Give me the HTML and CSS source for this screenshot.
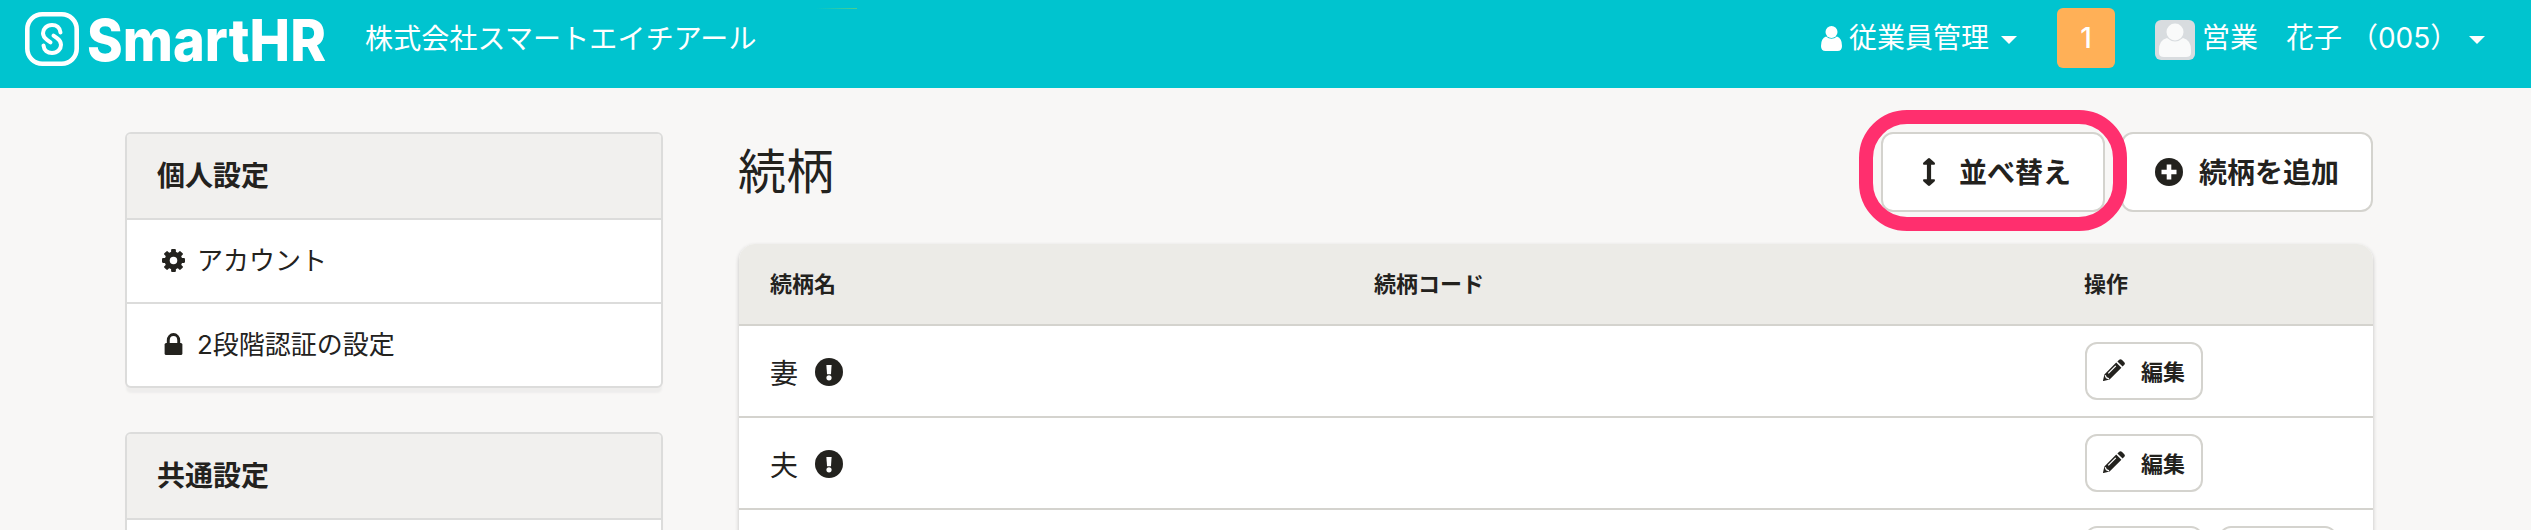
FILE: index.html
```html
<!DOCTYPE html>
<html lang="ja">
<head>
<meta charset="utf-8">
<title>続柄 | SmartHR</title>
<link rel="stylesheet" href="styles.css">
</head>
<body>
<svg class="defs" width="0" height="0">
  <symbol id="pencil" viewBox="0 0 22 22"><path fill="currentColor" d="M13.2 3.6l5.2 5.2L6.6 20.600 0.600 22Q0 22 0 21.400L1.400 15.400zM14.400 2.400L16.200 .7q1.300-1.100 2.600 0l2.500 2.500q1.200 1.300 0 2.600l-1.700 1.800z"/><path d="M5.300 14.400l7.500-7.500M2.200 16.200l1.200 2.500 2.600 1.200" fill="none" stroke="#fff" stroke-width="1.300"/></symbol>
  <symbol id="alert" viewBox="0 0 28 28"><circle cx="14" cy="14" r="14" fill="currentColor"/><path fill="#fff" d="M11.400 7h5.200l-.6 9.200h-4z"/><circle cx="14" cy="19.800" r="2.600" fill="#fff"/></symbol>
</svg>
<header class="header">
  <div class="brand">
    <svg class="mark" viewBox="0 0 54 54"><rect x="2.300" y="2.300" width="49.400" height="49.400" rx="15" fill="none" stroke="#fff" stroke-width="4.600"/><path d="M35.500 20.500C35 15.500 31.500 13 27 13c-5.500 0-9 3.800-9 8.300 0 3 1.500 4.700 4 6.500l3.500 2.500M18.500 33.500C19 38.500 22.500 41 27 41c5.500 0 9-3.800 9-8.300 0-3-1.500-4.700-4-6.500l-3.500-2.500" fill="none" stroke="#fff" stroke-width="4" stroke-linecap="round"/></svg>
    <svg class="wordmark" viewBox="0 0 250 80"><text x="0" y="61" textLength="239" lengthAdjust="spacingAndGlyphs">SmartHR</text></svg>
  </div>
  <span class="company">株式会社スマートエイチアール</span>
  <i class="glint"></i>
  <div class="menu">
    <svg class="user" viewBox="0 0 21 25"><circle cx="10.500" cy="6" r="6" fill="#fff"/><path d="M5 10.500q5.500 4.500 11 0Q21 12 21 20q0 5-4.500 5h-12Q0 25 0 20q0-8 5-9.500z" fill="#fff"/></svg>
    <span class="menu-label">従業員管理</span>
    <i class="caret"></i>
  </div>
  <span class="notice">1</span>
  <div class="account">
    <svg class="avatar" viewBox="0 0 40 40"><rect width="40" height="40" rx="6" fill="#d8dcdf"/><circle cx="20" cy="12" r="8.500" fill="#f9fafa"/><path d="M12 18q8 7 16 0 8 2 8 12v3q0 4-5 4H9q-5 0-5-4v-3q0-10 8-12z" fill="#f9fafa"/></svg>
    <span class="account-name">営業　花子 （005）</span>
    <i class="caret"></i>
  </div>
</header>
<div class="page">
  <nav class="side">
    <section class="panel">
      <h2 class="panel-title">個人設定</h2>
      <a class="panel-row"><svg class="row-icon" viewBox="0 0 22 22"><g fill="currentColor"><rect x="8.700" y="0" width="4.600" height="22" rx="1"/><rect x="8.700" y="0" width="4.600" height="22" rx="1" transform="rotate(45 11 11)"/><rect x="8.700" y="0" width="4.600" height="22" rx="1" transform="rotate(90 11 11)"/><rect x="8.700" y="0" width="4.600" height="22" rx="1" transform="rotate(135 11 11)"/><circle cx="11" cy="11" r="8.500"/></g><circle cx="11" cy="11" r="3.600" fill="#fff"/></svg>アカウント</a>
      <a class="panel-row"><svg class="row-icon" viewBox="0 0 22 22"><rect x="2.500" y="9.500" width="17" height="11.500" rx="1.500" fill="currentColor"/><path d="M6 10V7a5 5.500 0 0 1 10 0v3" fill="none" stroke="currentColor" stroke-width="2.800"/></svg>2段階認証の設定</a>
    </section>
    <section class="panel">
      <h2 class="panel-title">共通設定</h2>
      <a class="panel-row"></a>
    </section>
  </nav>
  <main class="main">
    <div class="heading">
      <h1 class="title">続柄</h1>
      <div class="actions">
        <button class="btn btn-sort"><svg class="sort-icon" viewBox="0 0 12 28"><path fill="currentColor" d="M6 0q.6 0 1 .4L11.500 4.600q.5.500.5 1.400 0 .8-1 .8H8.100v14.400H11q1 0 1 .8 0 .9-.5 1.400L7 27.600q-.4.4-1 .4t-1-.4L.5 23.400Q0 22.900 0 22q0-.8 1-.8h2.900V6.800H1Q0 6.800 0 6q0-.9.5-1.400L5 .4Q5.400 0 6 0z"/></svg>並べ替え<span class="ring"></span></button>
        <button class="btn btn-add"><svg class="add-icon" viewBox="0 0 28 28"><circle cx="14" cy="14" r="14" fill="currentColor"/><path d="M14 6.500v15M6.500 14h15" stroke="#fff" stroke-width="4.600"/></svg>続柄を追加</button>
      </div>
    </div>
    <div class="table">
      <div class="tr th"><span>続柄名</span><span>続柄コード</span><span>操作</span></div>
      <div class="tr"><span class="name">妻<svg class="alert"><use href="#alert"/></svg></span><span></span><span class="ops"><button class="edit"><svg class="pencil"><use href="#pencil"/></svg>編集</button></span></div>
      <div class="tr"><span class="name">夫<svg class="alert"><use href="#alert"/></svg></span><span></span><span class="ops"><button class="edit"><svg class="pencil"><use href="#pencil"/></svg>編集</button></span></div>
      <div class="tr"><span></span><span></span><span class="ops"><button class="edit"></button><button class="edit"></button></span></div>
    </div>
  </main>
</div>
</body>
</html>
```
FILE: styles.css
```css
* { box-sizing: border-box; }
html { height: 100%; overflow: hidden; }
body {
  margin: 0;
  height: 530px;
  overflow: hidden;
  background: #f8f7f6;
  color: #23221e;
  font-family: Inter, "Noto Sans CJK JP", sans-serif;
}
svg { display: block; flex: none; }
.defs { position: absolute; }
.header {
  position: relative;
  display: flex;
  align-items: flex-start;
  height: 88px;
  padding: 0 46px 0 25px;
  background: #00c4cf;
  color: #fff;
  font-size: 28px;
  line-height: 60px;
}
.brand { display: flex; width: 340px; }
.mark { width: 54px; height: 54px; margin-top: 12px; }
.wordmark {
  width: 250px;
  height: 80px;
  margin-left: 8px;
  fill: #fff;
  font-family: Inter, sans-serif;
  font-size: 58px;
  font-weight: 800;
  overflow: visible;
}
.company { padding-top: 9px; letter-spacing: .15px; white-space: nowrap; }
.glint {
  position: absolute;
  top: 8px;
  left: 816px;
  width: 41px;
  height: 1px;
  background: linear-gradient(90deg, #00c4cf, #4fcf8c);
}
.menu { display: flex; align-items: center; height: 60px; margin: 8px 0 0 auto; white-space: nowrap; }
.user { width: 21px; height: 25px; margin-right: 7px; }
.menu-label { width: 140px; }
.caret {
  margin: 4px 0 0 12px;
  border: 8px solid transparent;
  border-top-color: #fff;
  border-bottom: 0;
}
.notice {
  width: 58px;
  height: 60px;
  margin: 8px 40px 0;
  border-radius: 6px;
  background: #ffb057;
  font-weight: 500;
  text-align: center;
}
.account { display: flex; align-items: center; height: 60px; width: 330px; margin-top: 8px; white-space: nowrap; }
.avatar { width: 40px; height: 40px; margin: 4px 7px 0 0; }
.account .caret { margin-left: auto; }
.page { display: flex; height: 442px; padding: 44px 158px 0 125px; overflow: hidden; }
.side { width: 538px; margin-right: 76px; }
.panel {
  margin-bottom: 44px;
  border: 2px solid #dcdcdb;
  border-radius: 6px;
  background: #fff;
  box-shadow: 0 6px 2px -1px #eeedec;
  overflow: hidden;
}
.panel-title {
  height: 84px;
  margin: 0;
  padding-left: 30px;
  background: #f1f0ee;
  font-size: 28px;
  font-weight: 700;
  line-height: 84px;
}
.panel-row {
  display: flex;
  align-items: center;
  height: 84px;
  padding: 0 0 5px 35px;
  border-top: 2px solid #dcdcdb;
  font-size: 26px;
}
.row-icon { width: 23px; height: 23px; margin: 4px 12px 0 0; }
.main { width: 1634px; }
.heading { display: flex; justify-content: space-between; height: 112px; }
.title { margin: 0 0 0 -1px; font-size: 48px; font-weight: 400; line-height: 80px; }
.actions { display: flex; gap: 16px; }
.btn, .edit {
  display: flex;
  align-items: center;
  border: 2px solid #d4d3ce;
  background: #fff;
  color: inherit;
  font-family: inherit;
  font-weight: 700;
  white-space: nowrap;
}
.btn { height: 80px; border-radius: 12px; font-size: 28px; padding: 0 0 2px; }
.btn-sort { position: relative; width: 224px; padding-left: 40px; }
.btn-add { width: 252px; padding-left: 32px; }
.sort-icon { width: 12px; height: 28px; margin: 2px 24px 0 0; }
.add-icon { width: 28px; height: 28px; margin: 2px 16px 0 0; }
.ring {
  position: absolute;
  top: -24px;
  left: -24px;
  width: 268px;
  height: 121px;
  border: 14px solid #ff2f6e;
  border-radius: 48px;
}
.table {
  border-radius: 16px 16px 0 0;
  background: #fff;
  box-shadow: 0 2px 4px rgba(0, 0, 0, .22);
  overflow: hidden;
}
.tr {
  display: grid;
  grid-template-columns: 604px 710px 1fr;
  align-items: center;
  height: 92px;
  padding-left: 32px;
  border-bottom: 2px solid #d4d3ce;
}
.th { height: 82px; padding: 0 0 4px 31px; background: #ecebe7; font-size: 22px; font-weight: 700; }
.name { display: flex; align-items: center; margin-left: -1px; padding-top: 2px; font-size: 28px; }
.alert { width: 28px; height: 28px; margin: -1px 0 0 17px; }
.ops { display: flex; gap: 16px; }
.edit { width: 118px; height: 58px; padding: 0 0 2px 16px; border-radius: 12px; font-size: 22px; }
.pencil { width: 22px; height: 22px; margin-right: 16px; }
```
